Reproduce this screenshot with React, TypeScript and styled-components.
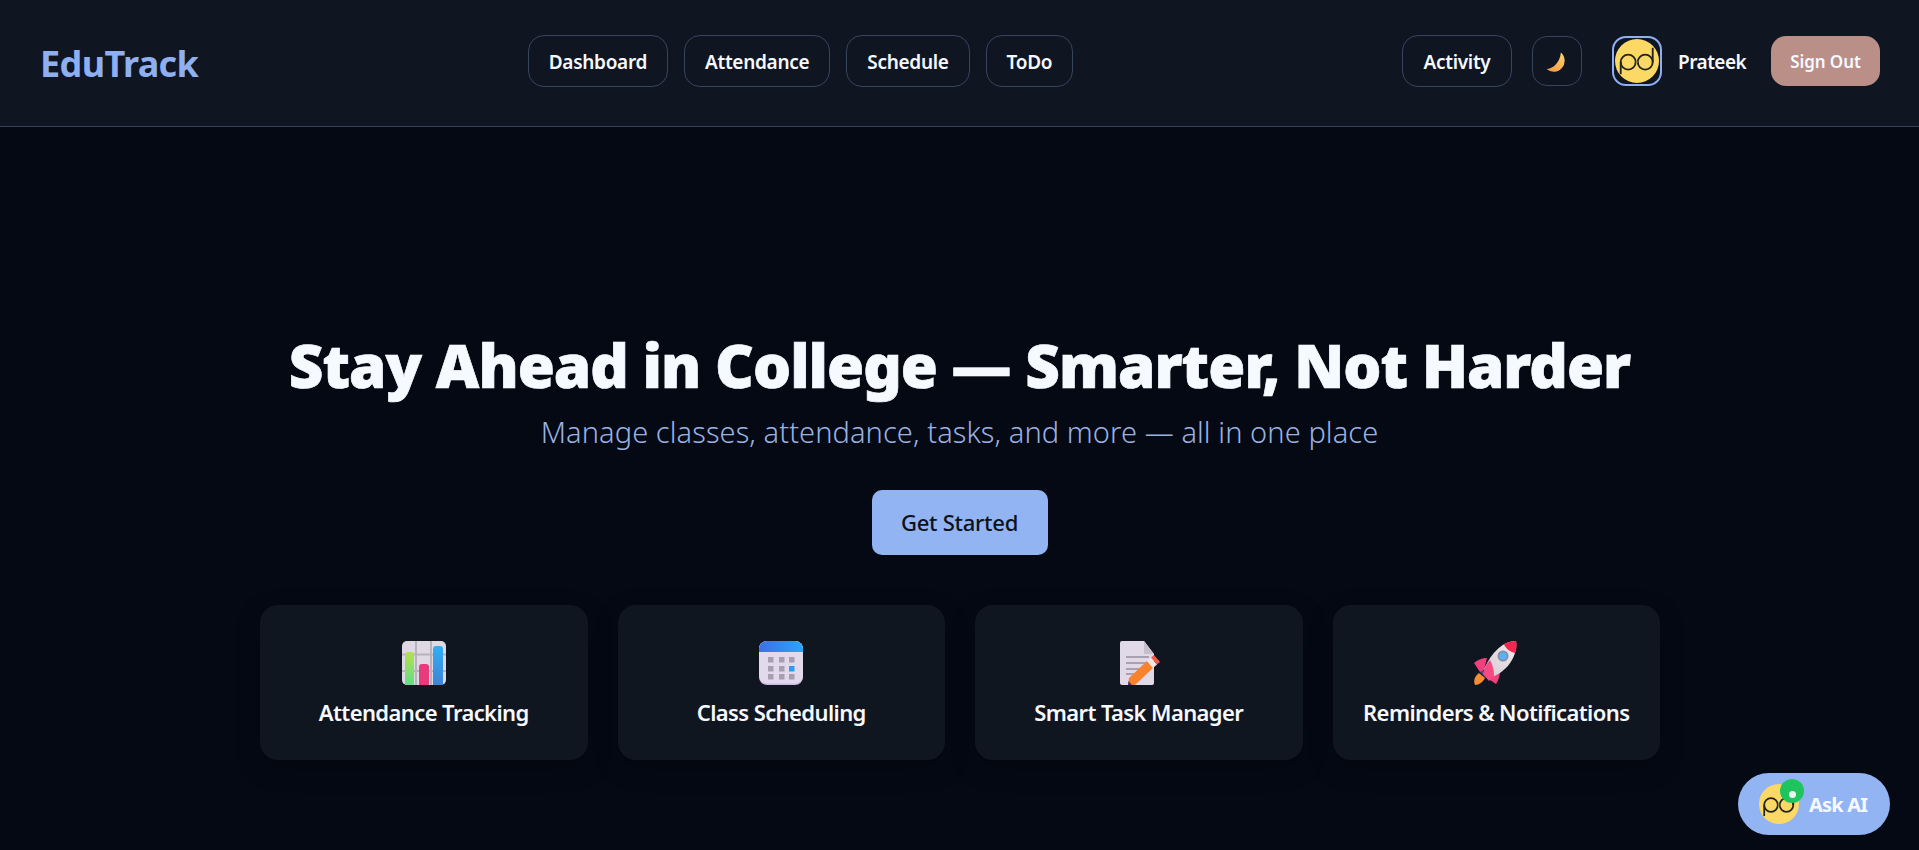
import styled, { createGlobalStyle } from 'styled-components'

const GlobalStyle = createGlobalStyle`
  html, body {
    margin: 0;
    background: #050914;
    height: 100%;
    overflow: hidden;
    font-family: "Noto Sans", "Open Sans", sans-serif;
  }
  * { box-sizing: border-box; }
`

const Page = styled.div`
  width: 1919px;
  height: 850px;
  position: relative;
  overflow: hidden;
  background: #050914;
  color: #f6f9ff;
`

const Navbar = styled.header`
  height: 127px;
  padding: 0 39px 4px 40px;
  display: flex;
  align-items: center;
  justify-content: space-between;
  background: #0f1622;
  border-bottom: 1px solid #354159;
`

const Logo = styled.div`
  width: 159px;
  margin-top: 4px;
  color: #8fb0f0;
  font-size: 36px;
  font-weight: 700;
  letter-spacing: -0.6px;
  white-space: nowrap;
`

const NavLinks = styled.nav`
  display: flex;
  gap: 16px;
`

const NavLink = styled.a`
  height: 52px;
  padding: 2px 20px 0;
  display: flex;
  align-items: center;
  color: #f6f9ff;
  font-size: 19px;
  font-weight: 600;
  letter-spacing: -0.3px;
  border: 1px solid #38445e;
  border-radius: 16px;
`

const UserArea = styled.div`
  display: flex;
  align-items: center;
`

const ActivityLink = styled(NavLink)`
  width: 110px;
  justify-content: center;
  padding: 2px 0 0;
`

const ThemeToggle = styled.button`
  width: 50px;
  height: 50px;
  margin-left: 20px;
  padding: 3px 0 0;
  display: flex;
  align-items: center;
  justify-content: center;
  background: transparent;
  border: 1px solid #38445e;
  border-radius: 15px;
`

const Avatar = styled.div`
  width: 50px;
  height: 50px;
  margin-left: 30px;
  padding: 1px;
  border: 2px solid #8fb0f0;
  border-radius: 14px;
  background: #0f1622;
`

const UserName = styled.span`
  margin: 2px 0 0 16px;
  width: 67px;
  font-size: 19px;
  font-weight: 600;
  letter-spacing: -0.5px;
  white-space: nowrap;
`

const SignOut = styled.button`
  width: 109px;
  height: 50px;
  margin-left: 26px;
  padding: 0;
  color: #f6f9ff;
  background: #b98f88;
  border: none;
  border-radius: 15px;
  font-family: inherit;
  font-size: 17px;
  font-weight: 600;
  letter-spacing: -0.1px;
`

const Hero = styled.main`
  padding-top: 202px;
  display: flex;
  flex-direction: column;
  align-items: center;
`

const Title = styled.h1`
  margin: 0;
  font-size: 60px;
  line-height: 72px;
  font-weight: 900;
  letter-spacing: -0.95px;
  white-space: nowrap;
  color: #f6f9ff;
  -webkit-text-stroke: 0.7px #f6f9ff;
`

const Subtitle = styled.p`
  margin: 12px 0 0;
  font-size: 29px;
  line-height: 38px;
  font-weight: 300;
  letter-spacing: 0.08px;
  color: #9ab2e2;
`

const CtaButton = styled.button`
  width: 176px;
  height: 65px;
  margin-top: 39px;
  padding: 0 0 2px;
  color: #0b1220;
  background: #93b4f2;
  border: none;
  border-radius: 10px;
  font-family: inherit;
  font-size: 22px;
  font-weight: 500;
  letter-spacing: -0.25px;
`

const FeatureRow = styled.section`
  width: 1400px;
  margin: 50px 0 0 1px;
  display: grid;
  grid-template-columns: repeat(4, 1fr);
  gap: 30px;
`

const FeatureCard = styled.article`
  height: 155px;
  padding-top: 36px;
  display: flex;
  flex-direction: column;
  align-items: center;
  background: #101620;
  border-radius: 18px;
  box-shadow: 0 8px 24px rgba(0, 0, 0, 0.25);
`

const FeatureLabel = styled.h3`
  margin: 12px 0 0;
  font-size: 22px;
  line-height: 30px;
  font-weight: 600;
  letter-spacing: -0.6px;
  white-space: nowrap;
  color: #f6f9ff;
`

const AskButton = styled.button`
  position: absolute;
  right: 29px;
  bottom: 15px;
  width: 152px;
  height: 62px;
  padding: 0 0 0 21px;
  display: flex;
  align-items: center;
  gap: 10px;
  color: #f6f9ff;
  background: #93b4f2;
  border: none;
  border-radius: 31px;
  font-family: inherit;
  font-size: 20px;
  font-weight: 700;
  letter-spacing: -0.8px;
`

const AskAvatar = styled.span`
  position: relative;
  width: 40px;
  height: 40px;
  display: block;
`

const OnlineDot = styled.span`
  position: absolute;
  top: -5px;
  right: -5px;
  width: 24px;
  height: 24px;
  display: flex;
  align-items: center;
  justify-content: center;
  background: #1fc45f;
  border-radius: 50%;
  &::after {
    content: '';
    width: 7px;
    height: 7px;
    margin-top: 6px;
    background: #e8f5ec;
    border-radius: 50%;
  }
`

const PdLogo = ({ size }: { size: number }) => (
  <svg width={size} height={size} viewBox="0 0 40 40" style={{ display: 'block' }}>
    <circle cx="20" cy="20" r="20" fill="#fcd964" />
    <g fill="none" stroke="#23231f" strokeWidth="1.7">
      <circle cx="12" cy="21" r="6.8" />
      <path d="M5.200 21v11" />
      <circle cx="27.500" cy="21" r="6.800" />
      <path d="M34.300 21V8" />
    </g>
    <path d="M18.800 21h2" stroke="#9a8a4a" strokeWidth="1" />
  </svg>
)

const MoonIcon = () => (
  <svg width="22" height="22" viewBox="0 0 20 20">
    <defs>
      <linearGradient id="moon" x1="0.8" y1="0" x2="0.2" y2="1">
        <stop offset="0" stopColor="#fdd268" />
        <stop offset="1" stopColor="#f59a48" />
      </linearGradient>
    </defs>
    <path d="M13.500 0.500A9.700 9.700 0 0 1 0.500 15.500C6 15.500 13 9.500 13.500 0.500z" fill="url(#moon)" />
  </svg>
)

const ChartIcon = () => (
  <svg width="44" height="44" viewBox="0 0 44 44">
    <defs>
      <linearGradient id="barGreen" x1="0" y1="0" x2="0" y2="1">
        <stop offset="0" stopColor="#b5e04e" />
        <stop offset="1" stopColor="#62dd88" />
      </linearGradient>
      <linearGradient id="barBlue" x1="0" y1="0" x2="0" y2="1">
        <stop offset="0" stopColor="#2fb0f5" />
        <stop offset="1" stopColor="#3f83d4" />
      </linearGradient>
    </defs>
    <rect width="44" height="44" rx="5" fill="#dfd9e4" />
    <path d="M0 13.500h44M0 30h44M14 0v44M29 0v44" stroke="#b8b2bd" strokeWidth="2" />
    <path d="M3 44V14a3 3 0 0 1 3-3h3a3 3 0 0 1 3 3v30z" fill="url(#barGreen)" />
    <path d="M17 44V26a3 3 0 0 1 3-3h4a3 3 0 0 1 3 3v18z" fill="#e83a7c" />
    <path d="M31 44V8a3 3 0 0 1 3-3h4a3 3 0 0 1 3 3v36z" fill="url(#barBlue)" />
  </svg>
)

const CALENDAR_CELLS = [16, 25, 33].flatMap((y) => [9, 20, 30].map((x) => ({ x, y })))

const CalendarIcon = () => (
  <svg width="44" height="44" viewBox="0 0 44 44">
    <defs>
      <linearGradient id="calTop" x1="0" y1="0" x2="1" y2="0">
        <stop offset="0" stopColor="#3f6fe8" />
        <stop offset="1" stopColor="#2aa5f5" />
      </linearGradient>
    </defs>
    <rect width="44" height="44" rx="8" fill="#cdb8e6" />
    <rect width="44" height="42.500" rx="8" fill="#e3d9ec" />
    <path d="M0 11V8a8 8 0 0 1 8-8h28a8 8 0 0 1 8 8v3z" fill="url(#calTop)" />
    {CALENDAR_CELLS.map(({ x, y }) => (
      <rect
        key={`${x}-${y}`}
        x={x}
        y={y}
        width="5.500"
        height="5.500"
        fill={x === 30 && y === 25 ? '#2a9df4' : '#a79fb0'}
      />
    ))}
  </svg>
)

const TaskIcon = () => (
  <svg width="40" height="44" viewBox="0 0 40 44" style={{ marginLeft: 3 }}>
    <path d="M0 2a2 2 0 0 1 2-2h22l10 13v29a2 2 0 0 1-2 2H2a2 2 0 0 1-2-2z" fill="#e2d9e8" />
    <path d="M24 0l10 13H24z" fill="#c6bfcb" />
    <path d="M6 16h23M6 22h23M6 28h18M6 33h10" stroke="#a8a1ae" strokeWidth="2" />
    <path d="M8 44l1-7L27 20l6 7-18 17z" fill="#f9832c" />
    <path d="M27 20l4-3.500 6 7-4 3.500z" fill="#f2e6e2" />
    <path d="M31 16.500l3-2.500 6 7-3 2.500z" fill="#f45a4a" />
    <path d="M8 44l0.500-4 3.500 4z" fill="#5b2b6a" />
  </svg>
)

const RocketIcon = () => (
  <svg width="44" height="44" viewBox="0 0 44 44">
    <defs>
      <linearGradient id="rocketBody" x1="1" y1="0" x2="0" y2="1">
        <stop offset="0" stopColor="#f0ecef" />
        <stop offset="1" stopColor="#d6cbd3" />
      </linearGradient>
    </defs>
    <path d="M1 44c-2-5 0-9 4-12l6 5c-2 4-6 7-10 7z" fill="#f78d32" />
    <path d="M7 30l6 6" stroke="#5a3f86" strokeWidth="3" />
    <path d="M0 22c3-3 8-5 13-5l-3 12-4 2z" fill="#f23f7d" />
    <path d="M22 43c2-3 4-8 4-13l-11 4-2 3z" fill="#f23f7d" />
    <path d="M42 0C30 0 18 10 10 28l8 8C34 30 44 14 42 0z" fill="url(#rocketBody)" />
    <path d="M42 0c-4 0-8 1-12 3 1 4 6 8 11 9 2-4 2-9 1-12z" fill="#f2274f" />
    <path d="M9 33c1-5 3-10 7-14 3 5 4 11 4 16l-5 5z" fill="#f64a84" />
    <circle cx="29" cy="15" r="5.500" fill="#8d8aa6" />
    <circle cx="29" cy="15" r="3.800" fill="#57b3f5" />
  </svg>
)

const NAV_ITEMS = ['Dashboard', 'Attendance', 'Schedule', 'ToDo']

const FEATURES = [
  { label: 'Attendance Tracking', Icon: ChartIcon },
  { label: 'Class Scheduling', Icon: CalendarIcon },
  { label: 'Smart Task Manager', Icon: TaskIcon },
  { label: 'Reminders & Notifications', Icon: RocketIcon },
]

const App = () => {
  return (
    <Page>
      <GlobalStyle />
      <Navbar>
        <Logo>EduTrack</Logo>
        <NavLinks>
          {NAV_ITEMS.map((item) => (
            <NavLink key={item}>{item}</NavLink>
          ))}
        </NavLinks>
        <UserArea>
          <ActivityLink>Activity</ActivityLink>
          <ThemeToggle>
            <MoonIcon />
          </ThemeToggle>
          <Avatar>
            <PdLogo size={44} />
          </Avatar>
          <UserName>Prateek</UserName>
          <SignOut>Sign Out</SignOut>
        </UserArea>
      </Navbar>
      <Hero>
        <Title>Stay Ahead in College — Smarter, Not Harder</Title>
        <Subtitle>Manage classes, attendance, tasks, and more — all in one place</Subtitle>
        <CtaButton>Get Started</CtaButton>
        <FeatureRow>
          {FEATURES.map(({ label, Icon }) => (
            <FeatureCard key={label}>
              <Icon />
              <FeatureLabel>{label}</FeatureLabel>
            </FeatureCard>
          ))}
        </FeatureRow>
      </Hero>
      <AskButton>
        <AskAvatar>
          <PdLogo size={40} />
          <OnlineDot />
        </AskAvatar>
        Ask AI
      </AskButton>
    </Page>
  )
}

export default App
